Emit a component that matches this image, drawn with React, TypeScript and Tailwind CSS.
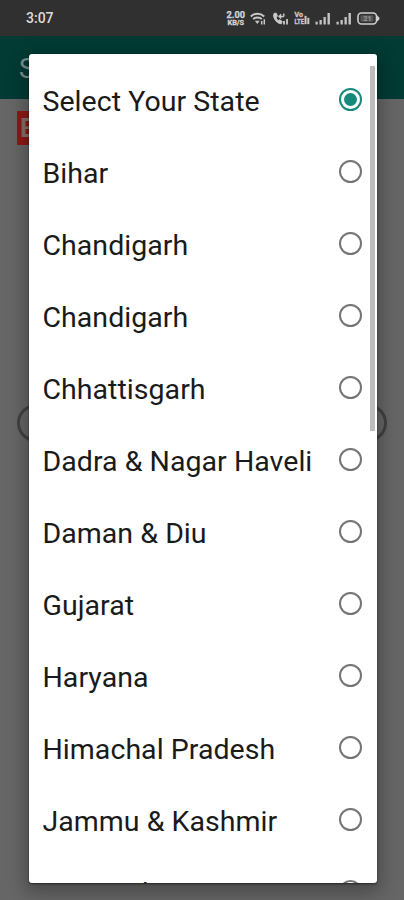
import clsx from "clsx";
import { useState } from "react";

const states = [
  "Select Your State",
  "Bihar",
  "Chandigarh",
  "Chandigarh",
  "Chhattisgarh",
  "Dadra & Nagar Haveli",
  "Daman & Diu",
  "Gujarat",
  "Haryana",
  "Himachal Pradesh",
  "Jammu & Kashmir",
  "Karnataka",
];

function Signal() {
  return (
    <svg width="16" height="13" viewBox="0 0 16 13" fill="#c4c4c4">
      <rect x="0.5" y="9.7" width="2.2" height="2.8" />
      <rect x="4.5" y="8" width="2.3" height="4.5" />
      <rect x="8.5" y="5" width="2.3" height="7.5" />
      <rect x="12.5" y="1" width="2.4" height="11.5" />
    </svg>
  );
}

function StatusBar() {
  return (
    <div className="flex h-9 items-center justify-between bg-[#303030] pl-[26px] pr-6 text-[#dcdcdc]">
      <span className="text-[14px] font-medium">3:07</span>
      <div className="flex items-center">
        <svg className="mr-[4px]" width="20" height="15" viewBox="0 0 20 15" fill="#d4d4d4" stroke="#d4d4d4" strokeWidth="0.3" fontWeight="700">
          <text x="0.5" y="7.3" fontSize="8.8" textLength="18.5" lengthAdjust="spacingAndGlyphs">2.00</text>
          <text x="1.5" y="14" fontSize="7" textLength="16.5" lengthAdjust="spacingAndGlyphs">KB/S</text>
        </svg>
        <svg className="mr-[6px]" width="16" height="13" viewBox="0 0 16 13" fill="none" stroke="#c8c8c8" strokeWidth="2">
          <path d="M0.8 4.4C4.6 0.8 10.4 0.8 14.2 4.4" />
          <path d="M3.2 7.1C5.6 4.9 9.4 4.9 11.8 7.1" />
          <path d="M4.9 8.8h4.8l-2.4 3.2z" fill="#c8c8c8" stroke="none" />
          <path d="M11.7 9v3.5M14.3 7.2v5.3" strokeWidth="1.5" />
        </svg>
        <svg className="mr-[5px]" width="17" height="13" viewBox="0 0 17 13" fill="none" stroke="#c8c8c8" strokeWidth="1.8">
          <path d="M2.3 1.2C0 4 3.8 11.5 9.2 11.8l1-2.3-2.4-1.7-1.6.8C4.8 7.6 4.3 6.5 4.2 5.2l1.2-1-1-2.9z" fill="#c8c8c8" strokeWidth="1" />
          <path d="M7.4 4.5h4.5M9.2 2.2L7 4.5l2.2 2.1M11.8 1.5v3" strokeWidth="1.4" />
          <path d="M12 9v3.5M15 7v5.5" />
        </svg>
        <svg className="mr-[5px]" width="16" height="14" viewBox="0 0 16 14" fill="#c8c8c8" stroke="#c8c8c8" strokeWidth="0.3" fontWeight="700">
          <text x="0.5" y="6" fontSize="6.5" textLength="8.5" lengthAdjust="spacingAndGlyphs">Vo</text>
          <text x="0.5" y="13.2" fontSize="6.5" textLength="9.5" lengthAdjust="spacingAndGlyphs">LTE</text>
          <rect x="10.8" y="5" width="1.6" height="8" />
          <rect x="13.5" y="7" width="1.6" height="6" />
        </svg>
        <div className="mr-[5px]">
          <Signal />
        </div>
        <div className="mr-[5px]">
          <Signal />
        </div>
        <svg width="23" height="13" viewBox="0 0 23 13" fill="none">
          <rect x="1" y="1" width="18.5" height="11" rx="3.4" stroke="#cfcfcf" strokeWidth="1.6" />
          <path d="M20 3.5v6l2.4-2v-2z" fill="#cfcfcf" />
          <rect x="3.5" y="3.2" width="13" height="6.6" rx="1" fill="#555" />
          <text x="6.5" y="9" fontSize="7" fontWeight="700" fill="#999">21</text>
        </svg>
      </div>
    </div>
  );
}

function Radio({ checked }: { checked: boolean }) {
  return (
    <span
      className={clsx(
        "grid size-[23px] shrink-0 place-items-center rounded-full border-2",
        checked ? "border-[#168a7a]" : "border-[#747474]",
      )}
    >
      {checked ? <span className="size-[13px] rounded-full bg-[#168a7a]" /> : null}
    </span>
  );
}

function App() {
  const [selected, setSelected] = useState(0);

  return (
    <main className="relative h-[900px] w-[404px] overflow-hidden bg-[#666666] font-[Roboto,sans-serif]">
      <StatusBar />
      <header className="flex h-[63px] items-center bg-[#013b34] pl-[19px] pt-[3px] text-[27px] text-[#7b928f]">
        State
      </header>
      <div className="h-[300px] pl-[17px] pt-3">
        <span className="inline-block h-[34px] bg-[#8a1b14] px-[3px] text-[26px] font-bold leading-[35px] text-[#85706e]">
          Back
        </span>
      </div>
      <div className="mx-[17px] mt-[5px] h-[38px] rounded-full border-[3px] border-[#424242]" />

      <div
        role="dialog"
        className="absolute left-[28.5px] top-[54px] h-[829px] w-[348px] overflow-hidden rounded-[3px] bg-white pt-[9.5px] shadow-[0_6px_18px_4px_rgba(0,0,0,0.28),0_1px_2px_rgba(0,0,0,0.5)]"
      >
        {states.map((state, index) => (
          <button
            key={`state-${index}`}
            className="flex h-[72px] w-full items-center justify-between pl-[14px] pr-[14.5px] text-left text-[28.5px] tracking-[0.04px] text-[#1a1a1a]"
            onClick={() => setSelected(index)}
          >
            <span className="whitespace-nowrap pt-[5px]">{state}</span>
            <Radio checked={index === selected} />
          </button>
        ))}
        <div className="absolute right-[2px] top-3 h-[365px] w-[5px] bg-[#bdbdbd]" />
      </div>
    </main>
  );
}

export default App;
